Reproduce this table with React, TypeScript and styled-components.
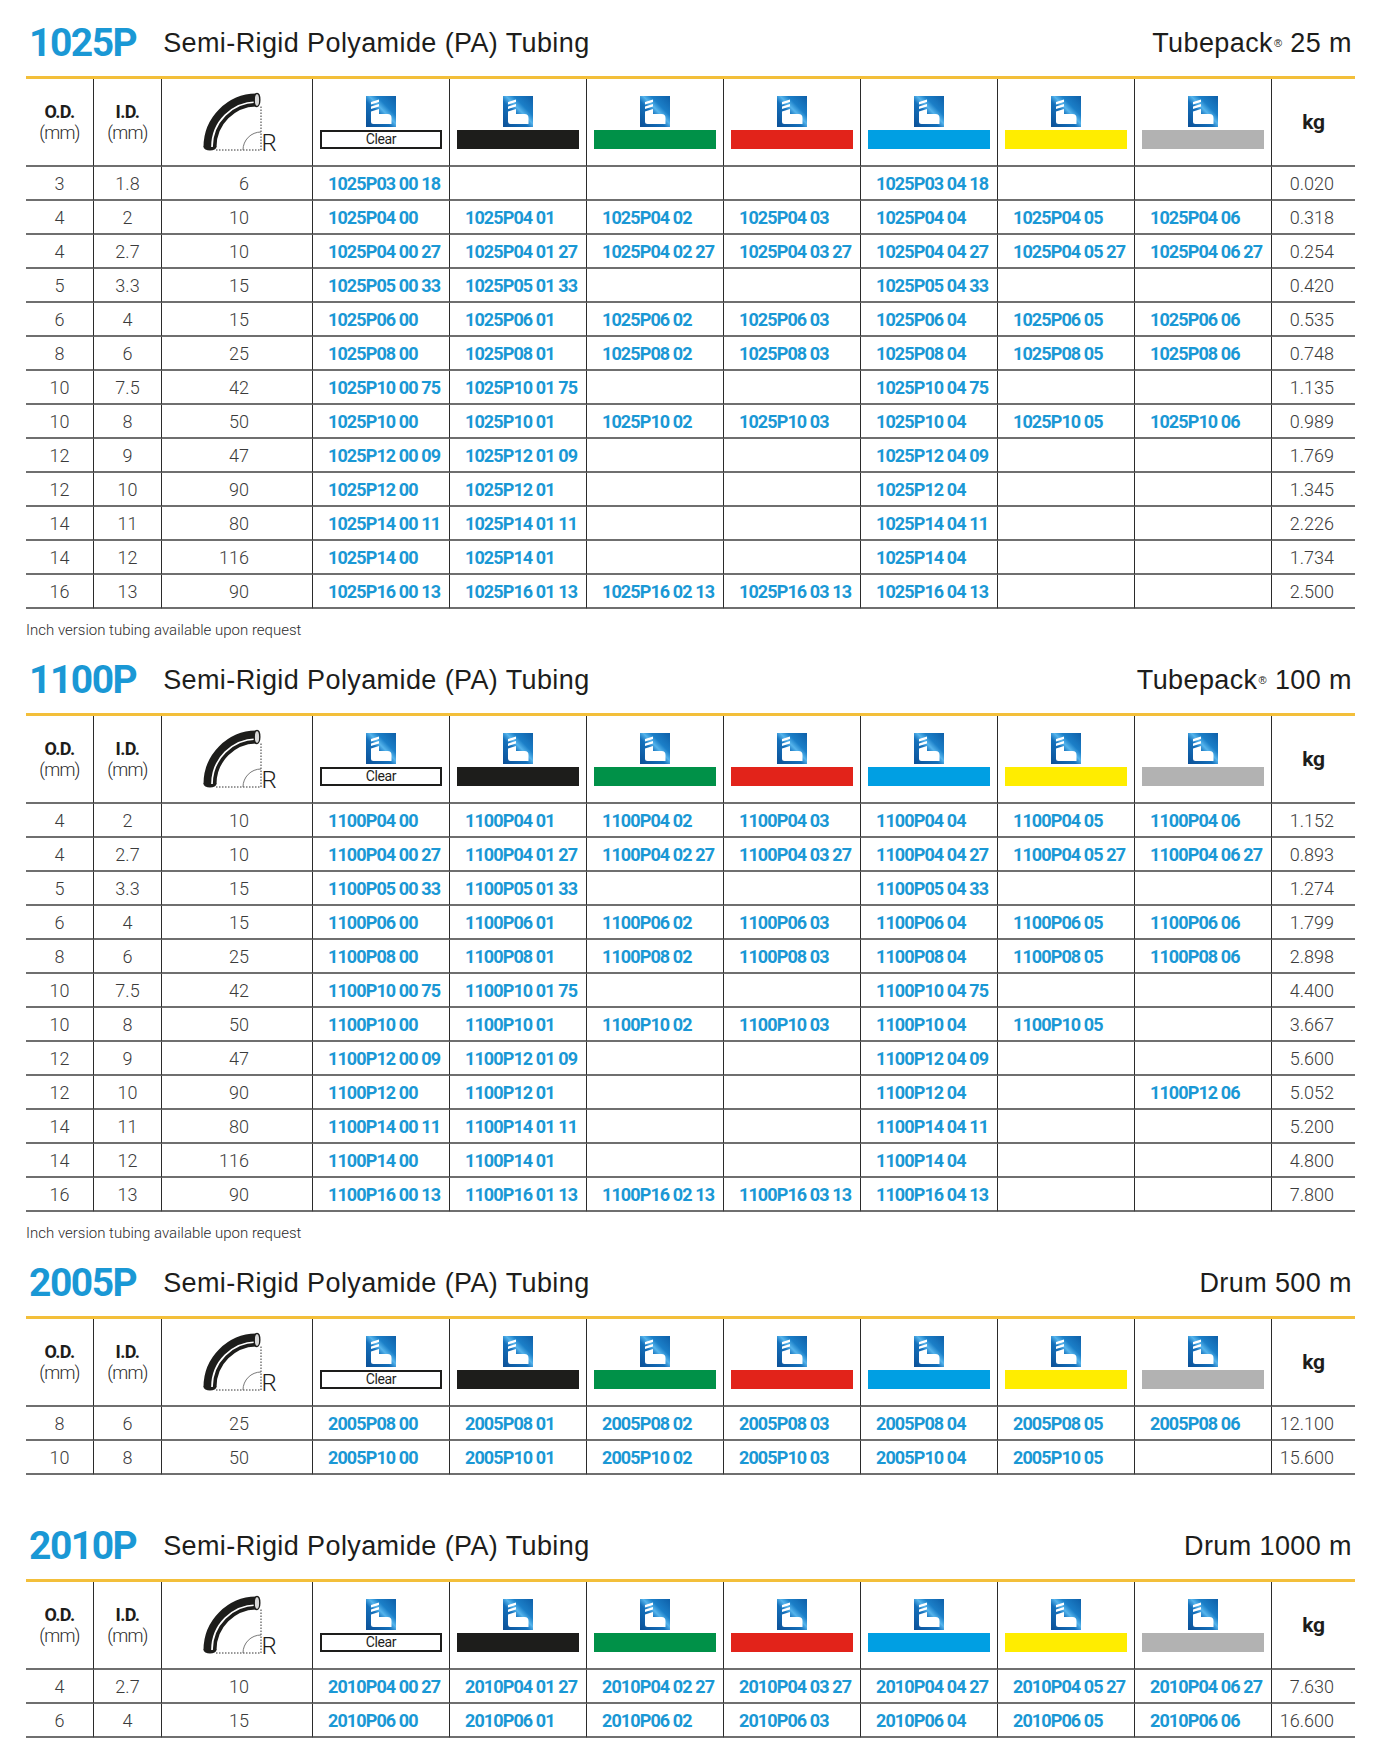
import React from "react";
import styled, { createGlobalStyle } from "styled-components";

const BLUE = "#1a98d5";
const INK = "#1d1d1b";

const GlobalStyle = createGlobalStyle`
  body {
    margin: 0;
    background: #fff;
    color: ${INK};
    font-family: Roboto, "Liberation Sans", sans-serif;
  }
`;

const Page = styled.div`
  width: 1329px;
  padding: 10px 22px 22px 26px;
`;

const Head = styled.div`
  display: flex;
  align-items: center;
  height: 66px;
  padding: 0 3px;
`;

const Series = styled.span`
  font: 700 39px Roboto, sans-serif;
  letter-spacing: -1.5px;
  color: ${BLUE};
`;

const Title = styled.span`
  margin-left: 27px;
  font: 400 27px "Liberation Sans", Arial, sans-serif;
  letter-spacing: 0.4px;
  color: ${INK};
`;

const Pack = styled(Title)`
  margin-left: auto;
`;

const Reg = styled.span`
  font-size: 11px;
  vertical-align: 5px;
  margin-left: 1px;
`;

const Grid = styled.div`
  display: grid;
  grid-template-columns: 68px 68px 151px repeat(7, 137px) 83px;
  border-top: 3px solid #f3bf3a;
`;

type Align = "left" | "center" | "right";

const justify = (a?: Align) =>
  a === "left" ? "flex-start" : a === "right" ? "flex-end" : "center";

const Cell = styled.div<{ $align?: Align; $pad?: number; $last?: boolean }>`
  box-sizing: border-box;
  height: 34px;
  display: flex;
  align-items: center;
  justify-content: ${(p) => justify(p.$align)};
  padding: ${(p) =>
    p.$align === "left"
      ? `0 0 0 ${p.$pad ?? 15}px`
      : p.$align === "right"
      ? `0 ${p.$pad ?? 21}px 0 0`
      : "0"};
  border-bottom: 2px solid #6f6f6f;
  border-right: ${(p) => (p.$last ? "none" : "1px solid #2b2b2b")};
`;

const HeadCell = styled(Cell)`
  height: 88px;
  flex-direction: column;
  gap: 3px;
`;

const Num = styled.span`
  font: 300 18px Roboto, sans-serif;
  color: #3b3b3b;
`;

const Code = styled.span`
  font: 700 18px Roboto, sans-serif;
  letter-spacing: -0.9px;
  color: ${BLUE};
  white-space: nowrap;
`;

const Label = styled.div`
  text-align: center;
  line-height: 25px;
`;

const LabelBold = styled.div`
  font: 700 18px Roboto, sans-serif;
  letter-spacing: -0.6px;
  color: ${INK};
`;

const LabelUnit = styled.div`
  font: 300 18px Roboto, sans-serif;
  letter-spacing: -0.8px;
  color: #2b2b2b;
`;

const Kg = styled.span`
  font: 700 21px Roboto, sans-serif;
  letter-spacing: -0.3px;
  color: ${INK};
`;

const Swatch = styled.div<{ $color: string }>`
  width: 122px;
  height: 19px;
  background: ${(p) => p.$color};
`;

const ClearSwatch = styled.div`
  box-sizing: border-box;
  width: 122px;
  height: 19px;
  border: 2px solid ${INK};
  display: flex;
  align-items: center;
  justify-content: center;
  font: 400 14px Roboto, sans-serif;
  letter-spacing: -0.4px;
  color: ${INK};
`;

const BendBox = styled.div`
  display: flex;
  align-items: flex-end;
  padding-left: 2px;
`;

const RadiusMark = styled.span`
  font: 300 24px Roboto, sans-serif;
  line-height: 1;
  margin: 0 0 -3px -2px;
  color: ${INK};
`;

const Note = styled.div`
  box-sizing: border-box;
  height: 38px;
  padding-top: 4px;
  display: flex;
  align-items: center;
  font: 300 15px Roboto, sans-serif;
  color: #2b2b2b;
`;

const Spacer = styled.div`
  height: 38px;
`;

const Brand = () => (
  <svg width="30" height="31" viewBox="0 0 30 31">
    <defs>
      <linearGradient id="brandGrad" x1="0" y1="1" x2="1" y2="0">
        <stop offset="0" stopColor="#0b4f96" />
        <stop offset="0.42" stopColor="#1470bb" />
        <stop offset="0.55" stopColor="#55b4ec" />
        <stop offset="0.68" stopColor="#1b7fc8" />
        <stop offset="1" stopColor="#0e5fa8" />
      </linearGradient>
    </defs>
    <rect width="30" height="31" fill="url(#brandGrad)" />
    <polygon points="5,6 13,3.5 13,6.1 5,8.6" fill="#fff" />
    <polygon points="5,10.5 13,8 13,10.6 5,13.1" fill="#fff" />
    <path
      d="M5 15.5 L13 13 L13 18 L21.5 18 Q25.5 18 25.5 22 L25.5 28 L7.5 28 Q5 28 5 25.5 Z"
      fill="#fff"
    />
  </svg>
);

const Bend = () => (
  <BendBox>
    <svg width="64" height="60" viewBox="0 -2 64 60">
      <path d="M17 56 H62 V12" fill="none" stroke="#333" strokeWidth="1" strokeDasharray="1.5 1.5" />
      <path d="M44 56 A18 18 0 0 1 62 38" fill="none" stroke="#555" strokeWidth="0.8" />
      <path d="M11 53 A47 47 0 0 1 58 6" fill="none" stroke={INK} strokeWidth="13" />
      <ellipse cx="11" cy="53" rx="6.5" ry="3.5" fill={INK} />
      <path d="M13 53 A45 45 0 0 1 58 8" fill="none" stroke="#fff" strokeWidth="1.7" />
      <ellipse cx="58" cy="6" rx="2.8" ry="6.5" fill="#d9d9d9" stroke={INK} strokeWidth="1.4" />
    </svg>
    <RadiusMark>R</RadiusMark>
  </BendBox>
);

const COLOURS = ["clear", "#1d1d1b", "#009148", "#e2231a", "#009fe3", "#ffed00", "#b2b2b2"];

type Row = [od: string, id: string, r: string, size: string, suffix: string, mask: string, kg: string];

type Section = { series: string; pack: React.ReactNode; note: boolean; rows: Row[] };

const sections: Section[] = [
  {
    series: "1025P",
    pack: <>Tubepack<Reg>®</Reg> 25 m</>,
    note: true,
    rows: [
      ["3", "1.8", "6", "03", "18", "1000100", "0.020"],
      ["4", "2", "10", "04", "", "1111111", "0.318"],
      ["4", "2.7", "10", "04", "27", "1111111", "0.254"],
      ["5", "3.3", "15", "05", "33", "1100100", "0.420"],
      ["6", "4", "15", "06", "", "1111111", "0.535"],
      ["8", "6", "25", "08", "", "1111111", "0.748"],
      ["10", "7.5", "42", "10", "75", "1100100", "1.135"],
      ["10", "8", "50", "10", "", "1111111", "0.989"],
      ["12", "9", "47", "12", "09", "1100100", "1.769"],
      ["12", "10", "90", "12", "", "1100100", "1.345"],
      ["14", "11", "80", "14", "11", "1100100", "2.226"],
      ["14", "12", "116", "14", "", "1100100", "1.734"],
      ["16", "13", "90", "16", "13", "1111100", "2.500"],
    ],
  },
  {
    series: "1100P",
    pack: <>Tubepack<Reg>®</Reg> 100 m</>,
    note: true,
    rows: [
      ["4", "2", "10", "04", "", "1111111", "1.152"],
      ["4", "2.7", "10", "04", "27", "1111111", "0.893"],
      ["5", "3.3", "15", "05", "33", "1100100", "1.274"],
      ["6", "4", "15", "06", "", "1111111", "1.799"],
      ["8", "6", "25", "08", "", "1111111", "2.898"],
      ["10", "7.5", "42", "10", "75", "1100100", "4.400"],
      ["10", "8", "50", "10", "", "1111110", "3.667"],
      ["12", "9", "47", "12", "09", "1100100", "5.600"],
      ["12", "10", "90", "12", "", "1100101", "5.052"],
      ["14", "11", "80", "14", "11", "1100100", "5.200"],
      ["14", "12", "116", "14", "", "1100100", "4.800"],
      ["16", "13", "90", "16", "13", "1111100", "7.800"],
    ],
  },
  {
    series: "2005P",
    pack: "Drum 500 m",
    note: false,
    rows: [
      ["8", "6", "25", "08", "", "1111111", "12.100"],
      ["10", "8", "50", "10", "", "1111110", "15.600"],
    ],
  },
  {
    series: "2010P",
    pack: "Drum 1000 m",
    note: false,
    rows: [
      ["4", "2.7", "10", "04", "27", "1111111", "7.630"],
      ["6", "4", "15", "06", "", "1111111", "16.600"],
    ],
  },
];

const code = (series: string, size: string, i: number, suffix: string) =>
  `${series}${size} 0${i}${suffix ? " " + suffix : ""}`;

const HeaderRow = () => (
  <>
    <HeadCell>
      <Label>
        <LabelBold>O.D.</LabelBold>
        <LabelUnit>(mm)</LabelUnit>
      </Label>
    </HeadCell>
    <HeadCell>
      <Label>
        <LabelBold>I.D.</LabelBold>
        <LabelUnit>(mm)</LabelUnit>
      </Label>
    </HeadCell>
    <HeadCell>
      <Bend />
    </HeadCell>
    {COLOURS.map((c) => (
      <HeadCell key={c}>
        <Brand />
        {c === "clear" ? <ClearSwatch>Clear</ClearSwatch> : <Swatch $color={c} />}
      </HeadCell>
    ))}
    <HeadCell $last>
      <Kg>kg</Kg>
    </HeadCell>
  </>
);

const Table = ({ section }: { section: Section }) => (
  <Grid>
    <HeaderRow />
    {section.rows.map(([od, id, r, size, suffix, mask, kg], ri) => (
      <React.Fragment key={ri}>
        <Cell><Num>{od}</Num></Cell>
        <Cell><Num>{id}</Num></Cell>
        <Cell $align="right" $pad={63}><Num>{r}</Num></Cell>
        {COLOURS.map((c, i) => (
          <Cell key={c} $align="left">
            {mask[i] === "1" && <Code>{code(section.series, size, i, suffix)}</Code>}
          </Cell>
        ))}
        <Cell $align="right" $last><Num>{kg}</Num></Cell>
      </React.Fragment>
    ))}
  </Grid>
);

export default function App() {
  return (
    <Page>
      <GlobalStyle />
      {sections.map((s, i) => (
        <section key={s.series}>
          <Head>
            <Series>{s.series}</Series>
            <Title>Semi-Rigid Polyamide (PA) Tubing</Title>
            <Pack>{s.pack}</Pack>
          </Head>
          <Table section={s} />
          {i < sections.length - 1 && (s.note ? <Note>Inch version tubing available upon request</Note> : <Spacer />)}
        </section>
      ))}
    </Page>
  );
}
